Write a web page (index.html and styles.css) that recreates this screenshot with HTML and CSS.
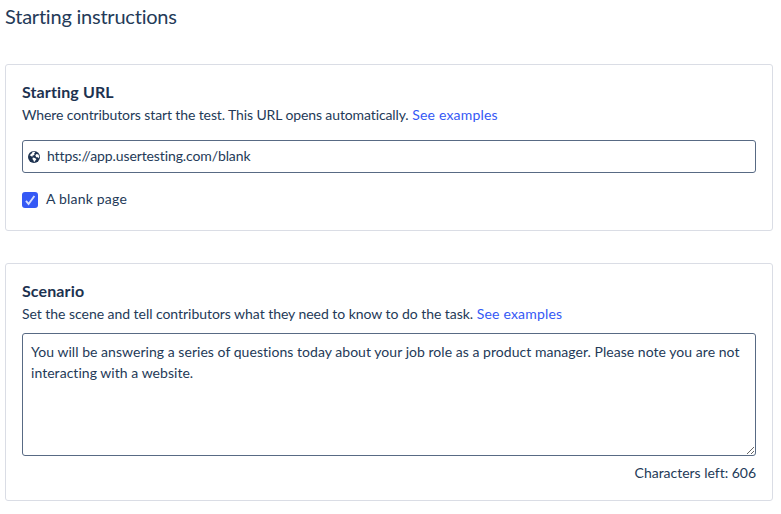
FILE: index.html
```html
<!DOCTYPE html>
<html lang="en">
<head>
    <meta charset="UTF-8">
    <title>Starting instructions</title>
    <link rel="stylesheet" href="styles.css">
</head>
<body>
    <div class="container">
        <h1 class="page-title">Starting instructions</h1>

        <div class="card url-card">
            <h2 class="card-title">Starting URL</h2>
            <p class="description"><span class="url-description">Where contributors start the test. This URL opens automatically.</span> <a href="#">See examples</a></p>
            <div class="url-field">
                <svg class="globe" viewBox="0 0 12 12">
                    <circle cx="6" cy="6" r="6" fill="#1d3250"/>
                    <path d="M4.7 .8 L6.6 .7 L7.2 1.5 L6.1 2.6 L6.7 3.2 L5.4 4.4 L4.3 4.8 L4.8 5.6 L3.5 5.4 L2.7 4.6 L1.6 5.2 L2.4 3.4 L3.9 2.2 Z" fill="#fff"/>
                    <path d="M7.3 4.2 L8.5 3.1 L10.4 3.6 L11.3 5.5 L10.6 7.2 L9.7 6.2 L8.2 6.3 Z" fill="#fff"/>
                    <path d="M4.9 6.6 L7 7 L8.3 8.2 L7.2 9.7 L6.1 11.2 L5.4 9.3 L4.4 8 Z" fill="#fff"/>
                </svg>
                <input type="text" value="https://app.usertesting.com/blank" spellcheck="false">
            </div>
            <label class="checkbox">
                <input type="checkbox" checked>
                <span class="box">
                    <svg viewBox="0 0 16 16">
                        <path d="M4 8.8 L6.6 12 L12.4 4" fill="none" stroke="#d5deff" stroke-width="1.9"/>
                    </svg>
                </span>
                <span class="checkbox-label">A blank page</span>
            </label>
        </div>

        <div class="card scenario-card">
            <h2 class="card-title">Scenario</h2>
            <p class="description"><span class="scenario-description">Set the scene and tell contributors what they need to know to do the task.</span> <a href="#">See examples</a></p>
            <textarea class="scenario" spellcheck="false">You will be answering a series of questions today about your job role as a product manager. Please note you are not interacting with a website.</textarea>
            <div class="counter">Characters left: 606</div>
        </div>
    </div>
</body>
</html>
```

FILE: styles.css
```css
* {
    box-sizing: border-box;
}

body {
    margin: 0;
    background-color: #fff;
    color: #243a58;
    font-family: Lato, "Liberation Sans", sans-serif;
    font-size: 14px;
    line-height: 21px;
}

.container {
    width: 768px;
    margin-left: 5px;
    padding-top: 4px;
}

.page-title {
    margin: 0 0 36px;
    font-size: 20px;
    font-weight: normal;
    line-height: 24px;
    letter-spacing: -0.22px;
}

.card {
    padding: 15px 16px 16px;
    border: 1px solid #dadde5;
    border-radius: 3px;
}

.url-card {
    height: 167px;
    margin-bottom: 32px;
}

.scenario-card {
    height: 238px;
}

.card-title {
    margin: 0;
    color: #1d3250;
    font-size: 16px;
    font-weight: bold;
    line-height: 24px;
    letter-spacing: 0.12px;
}

.description {
    margin: 0;
}

.description a {
    color: #3559f5;
    text-decoration: none;
    letter-spacing: 0.2px;
}

.url-description {
    letter-spacing: -0.11px;
}

.scenario-description {
    letter-spacing: -0.04px;
}

.url-field {
    display: flex;
    align-items: center;
    gap: 7px;
    height: 33px;
    margin-top: 15px;
    padding: 0 5px;
    border: 1px solid #586a84;
    border-radius: 3px;
}

.globe {
    width: 12px;
    height: 12px;
}

.url-field input {
    flex: 1;
    padding: 0 0 2px;
    border: none;
    outline: none;
    background: none;
    color: inherit;
    font: inherit;
    letter-spacing: -0.11px;
}

.checkbox {
    display: flex;
    align-items: center;
    gap: 8px;
    margin-top: 15px;
    letter-spacing: 0.2px;
}

.checkbox input {
    display: none;
}

.box {
    width: 16px;
    height: 16px;
    margin-top: 2px;
    border-radius: 3px;
    background: #3559f5;
}

.box svg {
    display: block;
}

.checkbox-label {
    padding-bottom: 1px;
}

.scenario {
    display: block;
    width: 100%;
    height: 123px;
    margin-top: 9px;
    padding: 7px 8px;
    border: 1px solid #586a84;
    border-radius: 3px;
    outline: none;
    background: #fff;
    color: inherit;
    font: inherit;
    letter-spacing: 0.04px;
}

.counter {
    margin-top: 6px;
    text-align: right;
    letter-spacing: -0.02px;
}
```
